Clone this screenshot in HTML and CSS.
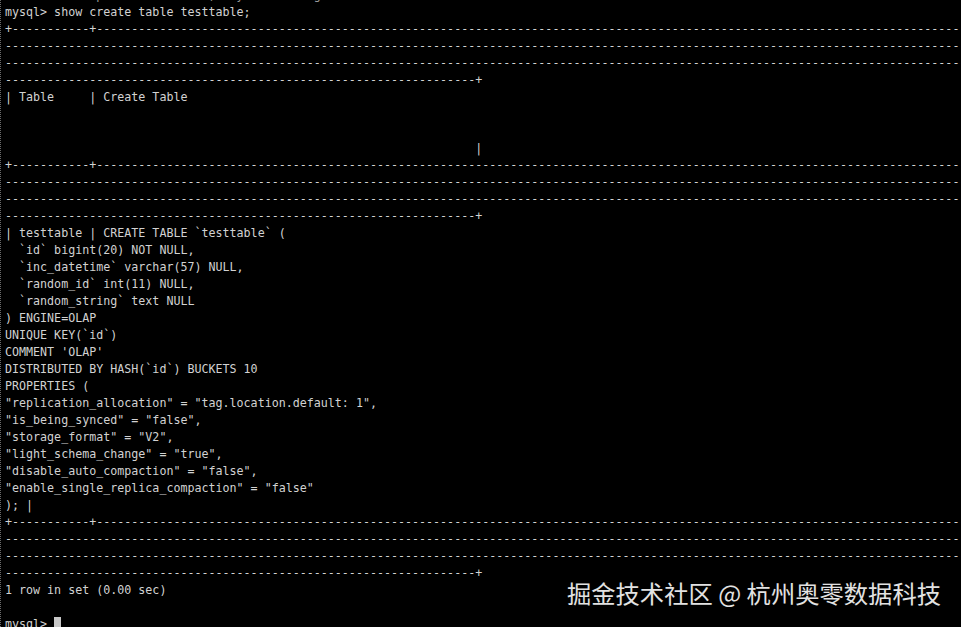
FILE: index.html
```html
<!DOCTYPE html>
<html lang="zh-CN">
<head>
<meta charset="utf-8">
<title>mysql terminal</title>
<link rel="stylesheet" href="styles.css">
</head>
<body>
<div class="terminal">
<pre class="screen"><span class="prev">             p               ,   y          g</span>
mysql&gt; show create table testtable;
+-----------+------------------------------------------------------------------------------------------------------------------------------------
--------------------------------------------------------------------------------------------------------------------------------------------------
--------------------------------------------------------------------------------------------------------------------------------------------------
-------------------------------------------------------------------+
| Table     | Create Table


                                                                   |
+-----------+------------------------------------------------------------------------------------------------------------------------------------
--------------------------------------------------------------------------------------------------------------------------------------------------
--------------------------------------------------------------------------------------------------------------------------------------------------
-------------------------------------------------------------------+
| testtable | CREATE TABLE `testtable` (
  `id` bigint(20) NOT NULL,
  `inc_datetime` varchar(57) NULL,
  `random_id` int(11) NULL,
  `random_string` text NULL
) ENGINE=OLAP
UNIQUE KEY(`id`)
COMMENT 'OLAP'
DISTRIBUTED BY HASH(`id`) BUCKETS 10
PROPERTIES (
"replication_allocation" = "tag.location.default: 1",
"is_being_synced" = "false",
"storage_format" = "V2",
"light_schema_change" = "true",
"disable_auto_compaction" = "false",
"enable_single_replica_compaction" = "false"
); |
+-----------+------------------------------------------------------------------------------------------------------------------------------------
--------------------------------------------------------------------------------------------------------------------------------------------------
--------------------------------------------------------------------------------------------------------------------------------------------------
-------------------------------------------------------------------+
1 row in set (0.00 sec)

mysql&gt; <span class="cursor"></span></pre>
<div class="watermark">掘金技术社区 @ 杭州奥零数据科技</div>
</div>
</body>
</html>
```
FILE: styles.css
```css
html, body {
  margin: 0;
  padding: 0;
  background: #000;
  height: 100%;
  overflow: hidden;
}

.terminal {
  position: relative;
  height: 627px;
  background: #000;
  border-left: 1px dotted #6a6a6a;
  box-sizing: border-box;
  overflow: hidden;
}

.screen {
  margin: 0;
  padding: 3.5px 0 0 4px;
  margin-top: -17px;
  font-family: "DejaVu Sans Mono", "Liberation Mono", monospace;
  font-size: 11.66px;
  line-height: 17px;
  color: #d2d2d2;
  white-space: pre;
  overflow: hidden;
}

.prev {
  color: #9a9a9a;
}

.cursor {
  display: inline-block;
  width: 7px;
  height: 14px;
  background: #c8c8c8;
  vertical-align: -3px;
}

.watermark {
  position: absolute;
  right: 20px;
  bottom: 19px;
  font-family: "Noto Sans CJK SC", "Noto Sans", sans-serif;
  font-size: 24.3px;
  line-height: 30px;
  color: #e2e2e2;
  letter-spacing: 0;
}
```
